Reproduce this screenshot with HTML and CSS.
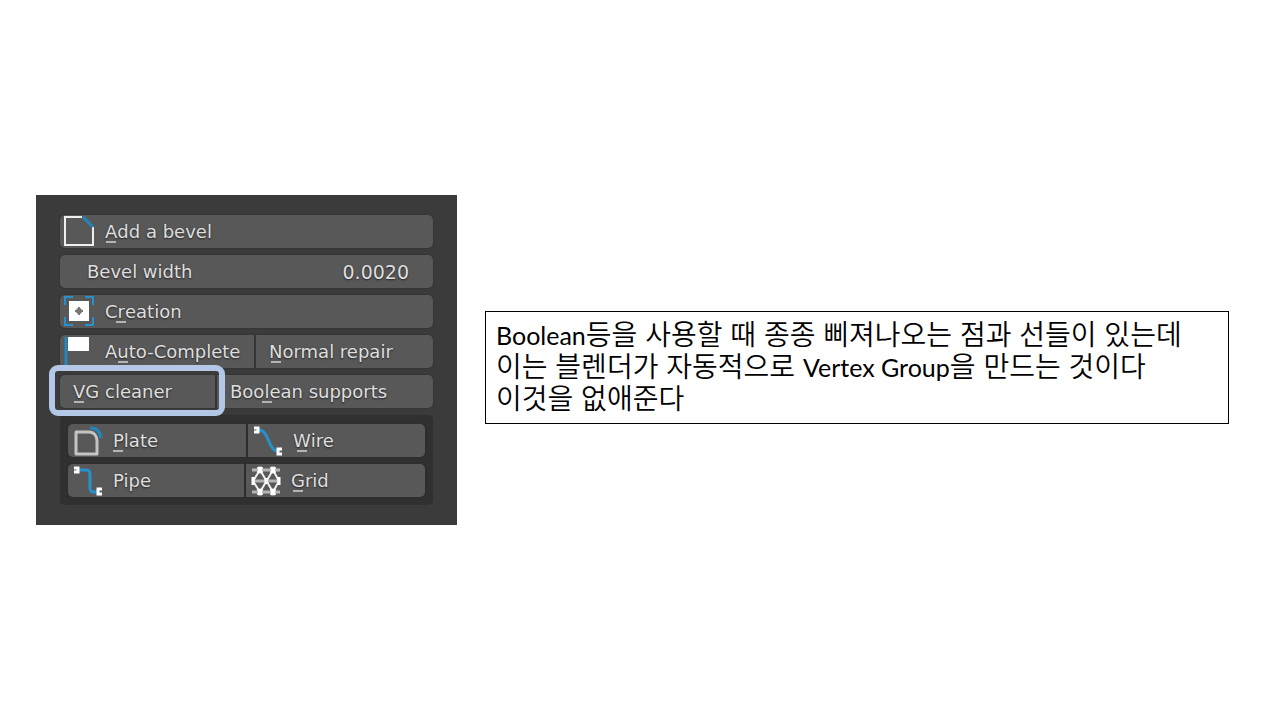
FILE: index.html
```html
<!DOCTYPE html>
<html lang="ko">
<head>
    <meta charset="UTF-8">
    <meta name="viewport" content="width=device-width, initial-scale=1.0">
    <title>VG cleaner</title>
    <link rel="stylesheet" href="styles.css">
</head>
<body>
    <main class="slide">
        <section class="panel">
            <button class="tool" type="button">
                <svg class="icon" width="32" height="32" viewBox="1 1 32 32">
                    <path d="M19 2H2v28h28V12" fill="none" stroke="#eee" stroke-width="2"/>
                    <path d="M20 2l10 10" stroke="#2387bd" stroke-width="3"/>
                </svg>
                <span><span class="key">A</span>dd a bevel</span>
            </button>

            <div class="tool field">
                <label for="bevel-width">Bevel width</label>
                <input id="bevel-width" type="text" value="0.0020">
            </div>

            <button class="tool" type="button">
                <svg class="icon" width="32" height="32" viewBox="1 1 32 32">
                    <path d="M2 10V2h8M22 2h8v8M30 22v8h-8M10 30H2v-8" fill="none" stroke="#2791cb" stroke-width="2"/>
                    <rect x="6" y="6" width="20" height="20" fill="#fff"/>
                    <circle cx="16" cy="16" r="3" fill="#777"/>
                    <path d="M16 12v8M12 16h8" stroke="#777" stroke-width="2"/>
                </svg>
                <span>C<span class="key">r</span>eation</span>
            </button>

            <div class="row row-auto">
                <button class="tool" type="button">
                    <svg class="icon" width="32" height="32" viewBox="0 0 32 32">
                        <path d="M2 1v31" stroke="#2387bd" stroke-width="3"/>
                        <rect x="4" y="1" width="21" height="14" fill="#fff"/>
                    </svg>
                    <span>A<span class="key">u</span>to-Complete</span>
                </button>
                <button class="tool text-only" type="button"><span><span class="key">N</span>ormal repair</span></button>
            </div>

            <div class="row row-cleaner">
                <button class="tool text-only marked" type="button"><span><span class="key">V</span>G cleaner</span></button>
                <button class="tool text-only" type="button"><span>Boo<span class="key">l</span>ean supports</span></button>
            </div>

            <div class="group">
                <div class="row row-plate">
                    <button class="tool" type="button">
                        <svg class="icon" width="32" height="32" viewBox="0 0 32 32">
                            <path d="M4 7h13c5 0 8 4 8 9v13H4z" fill="none" stroke="#c4c4c4" stroke-width="3" stroke-linejoin="round"/>
                            <path d="M18 3c6 0 10 3 11 10" fill="none" stroke="#2387bd" stroke-width="3"/>
                        </svg>
                        <span><span class="key">P</span>late</span>
                    </button>
                    <button class="tool" type="button">
                        <svg class="icon" width="32" height="32" viewBox="0 0 32 32">
                            <path d="M7 5c10 0 9 20 18 21" fill="none" stroke="#2791cb" stroke-width="3"/>
                            <path d="M2 3h4v4H2M30 24h-4v5h4" fill="none" stroke="#fff" stroke-width="3"/>
                        </svg>
                        <span><span class="key">W</span>ire</span>
                    </button>
                </div>
                <div class="row row-pipe">
                    <button class="tool" type="button">
                        <svg class="icon" width="32" height="32" viewBox="0 0 32 32">
                            <path d="M7 5h7q4 0 4 4v14q0 4 4 4h4" fill="none" stroke="#2791cb" stroke-width="3"/>
                            <path d="M2 3h4v4H2M30 24h-4v5h4" fill="none" stroke="#fff" stroke-width="3"/>
                        </svg>
                        <span>Pipe</span>
                    </button>
                    <button class="tool" type="button">
                        <svg class="icon" width="32" height="32" viewBox="0 0 32 32">
                            <path d="M2 5h28M2 16h28M2 27h28" stroke="#b4b4b4" stroke-width="3"/>
                            <path d="M3 16L10 5l13 22 6-11-6-11-13 22z" fill="none" stroke="#eee" stroke-width="2"/>
                            <path d="M8 2l4 6M12 2L8 8M21 2l4 6M25 2l-4 6M8 24l4 6M12 24l-4 6M21 24l4 6M25 24l-4 6M3 12v8M29 12v8M16 13v6" stroke="#fff" stroke-width="3"/>
                        </svg>
                        <span><span class="key">G</span>rid</span>
                    </button>
                </div>
            </div>
        </section>

        <p class="note">
            <span class="latin">Boolean</span>등을 사용할 때 종종 삐져나오는 점과 선들이 있는데<br>
            이는 블렌더가 자동적으로 <span class="latin">Vertex Group</span>을 만드는 것이다<br>
            이것을 없애준다
        </p>
    </main>
</body>
</html>
```

FILE: styles.css
```css
* {
    box-sizing: border-box;
}

body {
    margin: 0;
    background: #fff;
    color: #000;
}

.slide {
    min-height: 100vh;
    padding: 0 51px 0 36px;
    display: grid;
    grid-template-columns: 421fr 744fr;
    gap: 28px;
    align-items: center;
}

.panel {
    display: flex;
    flex-direction: column;
    gap: 7px;
    padding: 20px 24px;
    background: #3b3b3b;
    font-family: "DejaVu Sans", sans-serif;
    font-size: 18px;
}

.tool {
    display: flex;
    align-items: center;
    gap: 9px;
    min-width: 0;
    height: 33px;
    padding: 0 4px;
    border: none;
    border-radius: 5px;
    background: #585858;
    color: #dedede;
    font: inherit;
    text-align: left;
    white-space: nowrap;
    text-shadow: 0 1px 2px #222;
    box-shadow: 0 0 2px #2c2c2c;
}

.icon {
    flex: none;
}

.text-only {
    padding: 0 13px;
}

.field {
    justify-content: space-between;
    padding: 0 24px 0 27px;
}

.field input {
    width: 100px;
    padding: 0;
    border: none;
    background: none;
    color: inherit;
    font: inherit;
    font-size: 19px;
    text-align: right;
    text-shadow: inherit;
}

.row {
    display: grid;
    gap: 2px;
}

.row .tool:first-child {
    border-radius: 5px 0 0 5px;
}

.row .tool:last-child {
    border-radius: 0 5px 5px 0;
}

.row-auto {
    grid-template-columns: 194fr 177fr;
}

.row-cleaner {
    grid-template-columns: 155fr 216fr;
}

.row-plate {
    grid-template-columns: 178fr 177fr;
}

.row-pipe {
    grid-template-columns: 176fr 179fr;
}

.group {
    display: flex;
    flex-direction: column;
    gap: 7px;
    padding: 9px 8px 8px;
    border-radius: 5px;
    background: #303030;
}

/* accelerator mark below a letter */
.key {
    position: relative;
}

.key::after {
    content: "";
    position: absolute;
    left: 50%;
    bottom: -1px;
    width: 10px;
    height: 2px;
    margin-left: -5px;
    background: #b4b4b4;
}

.marked {
    position: relative;
}

.marked::after {
    content: "";
    position: absolute;
    inset: -10px -10px -8px -11px;
    border: 6px solid #b4c7e7;
    border-radius: 9px;
}

.note {
    margin: 15px 0 0;
    padding: 5px 10px 10px;
    border: 1px solid #000;
    font-family: "Noto Sans CJK KR", sans-serif;
    font-size: 28px;
    font-weight: 350;
    line-height: 32px;
}

.latin {
    font-family: Lato, sans-serif;
    font-size: 25px;
    font-weight: 400;
    line-height: 1;
}
```
